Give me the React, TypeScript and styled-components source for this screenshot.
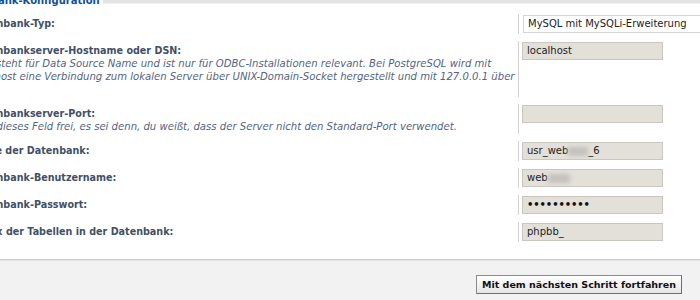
import React from 'react';
import styled, { createGlobalStyle } from 'styled-components';

const Global = createGlobalStyle`
  html, body { margin: 0; padding: 0; background: #ffffff; }
  body {
    width: 700px;
    height: 300px;
    overflow: hidden;
    font-family: "DejaVu Sans", Verdana, sans-serif;
  }
`;

const Page = styled.div`
  width: 700px;
  height: 300px;
  overflow: hidden;
  display: flex;
  flex-direction: column;
  background: #ffffff;
`;

const Fieldset = styled.section`
  flex: 1;
  display: flex;
  flex-direction: column;
  margin-left: -29px;
`;

const LegendBar = styled.div`
  display: flex;
  align-items: flex-start;
  height: 8px;
`;

const Legend = styled.h2`
  margin: -6px 0 0 -14px;
  padding-right: 3px;
  font-size: 10px;
  line-height: 13px;
  font-weight: bold;
  color: #115098;
  white-space: nowrap;
`;

const LegendRule = styled.div`
  flex: 1;
  height: 3px;
  background: #e3e3e3;
  border-bottom: 1px solid #f1f1f1;
`;

const Rows = styled.div`
  display: flex;
  flex-direction: column;
  gap: 7px;
  padding-top: 6px;
`;

const Row = styled.div`
  display: grid;
  grid-template-columns: 547px 1fr;
`;

const Term = styled.div`
  padding: 3px 0 1px;
  font-size: 10px;
  line-height: 13px;
  color: #425067;
  white-space: nowrap;
`;

const Label = styled.label`
  display: block;
  font-weight: bold;
  font-size: 9.6px;
`;

const Explain = styled.span`
  display: block;
  font-style: italic;
  font-size: 10.1px;
  color: #536482;
`;

const Desc = styled.div`
  border-left: 1px solid #d2d2d2;
  padding: 1px 0 1px 3px;
  display: flex;
  align-items: flex-start;
`;

const Field = styled.div`
  box-sizing: border-box;
  width: 141px;
  height: 18px;
  padding: 0 4px;
  border: 1px solid #cbc7bf;
  background: #e3e0da;
  font-size: 10px;
  line-height: 16px;
  color: #222222;
  white-space: nowrap;
  display: flex;
  align-items: center;
`;

const Select = styled.div`
  box-sizing: border-box;
  width: 220px;
  height: 18px;
  margin-left: 1px;
  padding: 0 4px;
  border: 1px solid #d6d6d6;
  background: #ffffff;
  font-size: 10px;
  line-height: 16px;
  color: #222222;
  white-space: nowrap;
`;

const Blur = styled.span<{ $w: number }>`
  display: inline-block;
  width: ${p => p.$w}px;
  height: 9px;
  background: #c4c1bc;
  filter: blur(2px);
`;

const Dots = styled.span`
  font-size: 10px;
  font-weight: bold;
  letter-spacing: -0.1px;
  color: #111111;
`;

const Footer = styled.div`
  height: 41px;
  box-sizing: border-box;
  border-top: 1px solid #cfcfcf;
  box-shadow: inset 0 1px 0 #e4e4e4;
  background: #f2f2f2;
  display: flex;
  justify-content: flex-end;
  align-items: flex-start;
  padding: 15px 18px 0 0;
`;

const Button = styled.button`
  height: 19px;
  padding: 0 5px;
  border: 1px solid #8c8c8c;
  border-right-color: #6e6e6e;
  border-bottom-color: #6e6e6e;
  background: linear-gradient(#ffffff, #e6e6e6);
  font-family: "DejaVu Sans", Verdana, sans-serif;
  font-size: 9.5px;
  font-weight: bold;
  color: #111111;
  line-height: 16px;
  white-space: nowrap;
`;

export default function App() {
  return (
    <Page>
      <Global />
      <Fieldset>
        <LegendBar>
          <Legend>Datenbank-Konfiguration</Legend>
          <LegendRule />
        </LegendBar>
        <Rows>
          <Row>
            <Term><Label>Datenbank-Typ:</Label></Term>
            <Desc><Select>MySQL mit MySQLi-Erweiterung</Select></Desc>
          </Row>
          <Row>
            <Term>
              <Label>Datenbankserver-Hostname oder DSN:</Label>
              <Explain>
                DSN steht für Data Source Name und ist nur für ODBC-Installationen relevant. Bei PostgreSQL wird mit<br />
                localhost eine Verbindung zum lokalen Server über UNIX-Domain-Socket hergestellt und mit 127.0.0.1 über<br />
                TCP.
              </Explain>
            </Term>
            <Desc><Field>localhost</Field></Desc>
          </Row>
          <Row>
            <Term>
              <Label>Datenbankserver-Port:</Label>
              <Explain>Lass dieses Feld frei, es sei denn, du weißt, dass der Server nicht den Standard-Port verwendet.</Explain>
            </Term>
            <Desc><Field /></Desc>
          </Row>
          <Row>
            <Term><Label>Name der Datenbank:</Label></Term>
            <Desc><Field>usr_web<Blur $w={20} />_6</Field></Desc>
          </Row>
          <Row>
            <Term><Label>Datenbank-Benutzername:</Label></Term>
            <Desc><Field>web<Blur $w={22} /></Field></Desc>
          </Row>
          <Row>
            <Term><Label>Datenbank-Passwort:</Label></Term>
            <Desc><Field><Dots>••••••••••</Dots></Field></Desc>
          </Row>
          <Row>
            <Term><Label>Präfix der Tabellen in der Datenbank:</Label></Term>
            <Desc><Field>phpbb_</Field></Desc>
          </Row>
        </Rows>
      </Fieldset>
      <Footer>
        <Button type="button">Mit dem nächsten Schritt fortfahren</Button>
      </Footer>
    </Page>
  );
}
